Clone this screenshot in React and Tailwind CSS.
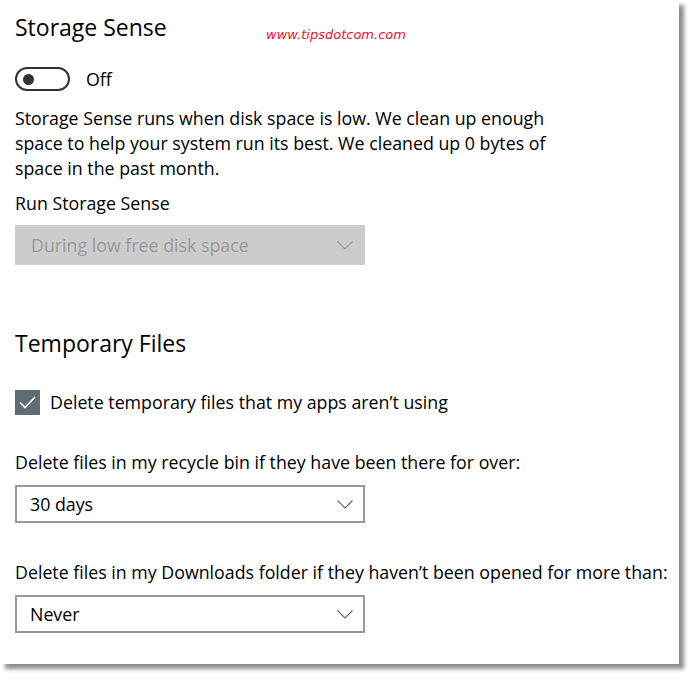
import React from "react";

const font = { fontFamily: '"Open Sans", "Noto Sans", sans-serif' };

const Chevron = ({ color = "#666" }) => (
  <svg width="16" height="9" viewBox="0 0 16 9" fill="none">
    <polyline points="0.5,0.5 8,8 15.5,0.5" stroke={color} strokeWidth="1.1" />
  </svg>
);

const Dropdown = ({ value, disabled }) =>
  disabled ? (
    <div className="flex items-center justify-between w-[350px] h-[40px] bg-[#cccccc] pl-[16px] pr-[12px]">
      <span className="text-[17.8px] leading-[24px] text-[#9a9a9a]">{value}</span>
      <Chevron color="#9a9a9a" />
    </div>
  ) : (
    <div className="flex items-center justify-between w-[350px] h-[38px] border-2 border-[#999999] bg-white pl-[13px] pr-[10px]">
      <span className="text-[17.8px] leading-[24px] text-black">{value}</span>
      <Chevron color="#666" />
    </div>
  );

export default function App() {
  return (
    <div className="w-[694px] h-[680px] bg-white" style={font}>
      <div className="relative w-[679px] h-[664px] bg-white shadow-[5px_5px_4px_rgba(0,0,0,0.45)] pl-[15px] pt-[11px] text-black">
        <span
          className="absolute left-[266px] top-[25px] text-[13px] italic text-[#e8102a]"
          style={{ fontFamily: '"DejaVu Sans", Verdana, sans-serif' }}
        >
          www.tipsdotcom.com
        </span>

        <h1 className="text-[23px] leading-[32px] font-normal">Storage Sense</h1>

        <div className="mt-[24px] flex items-center gap-[16px] h-[24px]">
          <div className="w-[55px] h-[24px] rounded-full border-2 border-[#333] flex items-center pl-[6px]">
            <div className="w-[11px] h-[11px] rounded-full bg-[#333]" />
          </div>
          <span className="text-[17.8px] leading-[24px]">Off</span>
        </div>

        <p className="mt-[15px] w-[545px] text-[17.8px] leading-[25px]">
          Storage Sense runs when disk space is low. We clean up enough space to help your system run its best. We cleaned up 0 bytes of space in the past month.
        </p>

        <div className="mt-[10px] text-[17.8px] leading-[25px]">Run Storage Sense</div>
        <div className="mt-[9px]">
          <Dropdown value="During low free disk space" disabled />
        </div>

        <h2 className="mt-[62px] text-[23px] leading-[32px] font-normal">Temporary Files</h2>

        <div className="mt-[31px] flex items-center gap-[10px] h-[25px]">
          <div className="w-[25px] h-[25px] bg-[#5f6c73] flex items-center justify-center">
            <svg width="17" height="13" viewBox="0 0 17 13" fill="none">
              <polyline points="1,6.5 6,11.5 16,1" stroke="white" strokeWidth="1.6" />
            </svg>
          </div>
          <span className="text-[17.8px] leading-[25px]">Delete temporary files that my apps aren’t using</span>
        </div>

        <div className="mt-[35px] text-[17.8px] leading-[25px]">
          Delete files in my recycle bin if they have been there for over:
        </div>
        <div className="mt-[10px]">
          <Dropdown value="30 days" />
        </div>

        <div className="mt-[37px] text-[17.8px] leading-[25px] whitespace-nowrap">
          Delete files in my Downloads folder if they haven’t been opened for more than:
        </div>
        <div className="mt-[10px]">
          <Dropdown value="Never" />
        </div>
      </div>
    </div>
  );
}
